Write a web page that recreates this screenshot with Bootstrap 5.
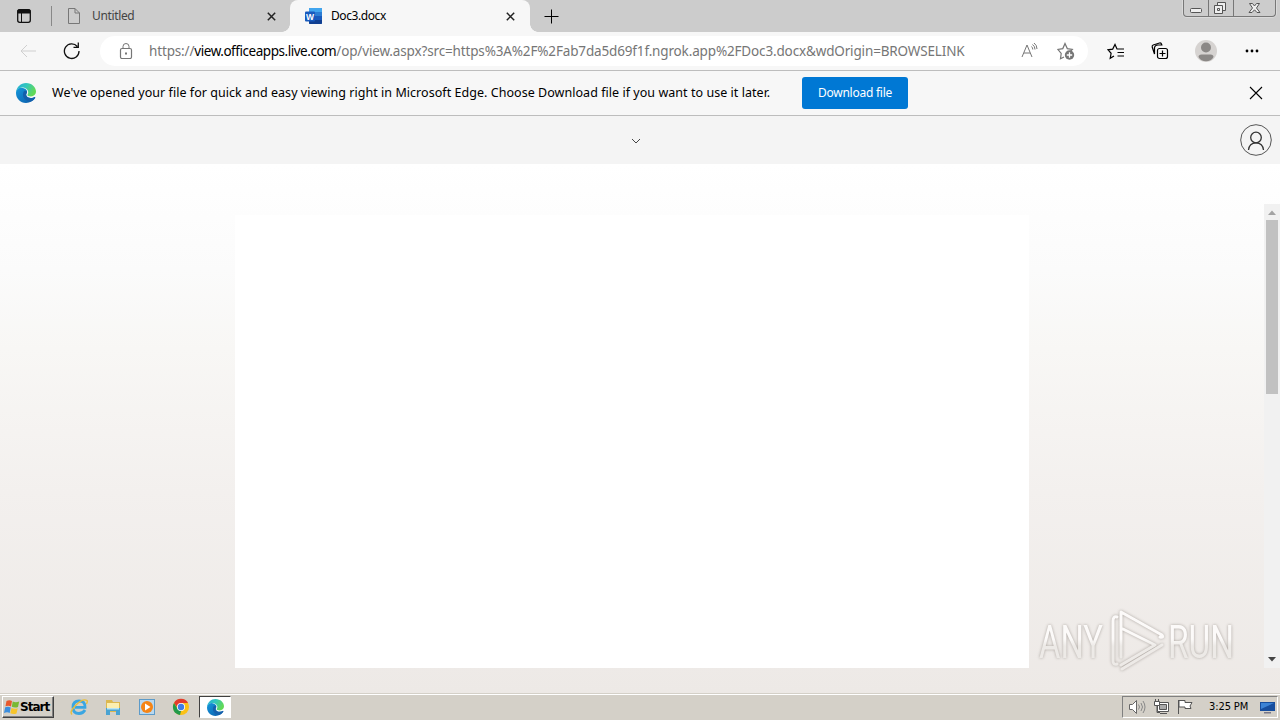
<!DOCTYPE html>
<html lang="en">
<head>
  <meta charset="UTF-8">
  <meta name="viewport" content="width=device-width, initial-scale=1.0">
  <title>Doc3.docx</title>
  <link href="https://cdn.jsdelivr.net/npm/bootstrap@5.3.0/dist/css/bootstrap.min.css" rel="stylesheet">
  <style>
    body {
      height: 720px;
      font-family: "Noto Sans", "Open Sans", sans-serif;
      font-size: 12px;
      line-height: 16px;
      color: #000;
      overflow: hidden;
    }
    svg {
      display: block;
      flex: none;
      fill: none;
      stroke: currentColor;
    }
    svg.flat {
      stroke: none;
    }
    .tab-strip {
      height: 32px;
      background: #ccc;
    }
    .strip-left {
      width: 290px;
      padding-left: 16px;
      color: #444;
    }
    .strip-line {
      width: 1px;
      height: 20px;
      margin: 0 15px 0 19px;
      background: #888;
    }
    .tab-name {
      margin-left: 11px;
      letter-spacing: -.35px;
    }
    .active-tab {
      width: 240px;
      background: #f7f7f7;
      border-radius: 8px 8px 0 0;
      padding: 0 15px;
    }
    .active-tab .tab-name {
      margin-left: 9px;
      letter-spacing: -.42px;
    }
    .active-tab::before,
    .active-tab::after {
      content: "";
      position: absolute;
      bottom: 0;
      width: 8px;
      height: 8px;
    }
    .active-tab::before {
      left: -8px;
      background: radial-gradient(circle at 0 0, #ccc 7.5px, #f7f7f7 8px);
    }
    .active-tab::after {
      right: -8px;
      background: radial-gradient(circle at 100% 0, #ccc 7.5px, #f7f7f7 8px);
    }
    .win-buttons {
      width: 93px;
      height: 17px;
      margin-right: 4px;
      border: 1px solid #777;
      border-top: 0;
      border-radius: 0 0 4px 4px;
      box-shadow: 0 0 0 1px #dadada;
    }
    .toolbar-row {
      height: 39px;
      background: #f7f7f7;
      border-bottom: 1px solid #bdbdbd;
      padding-left: 20px;
    }
    .address-bar {
      width: 988px;
      height: 30px;
      margin-left: 20px;
      padding: 0 13px 0 19px;
      border-radius: 15px;
      background: #fff;
      color: #767676;
    }
    .address-text {
      margin-left: 16px;
      font-size: 13.5px;
      letter-spacing: -.15px;
      white-space: nowrap;
    }
    .address-host {
      color: #000;
      letter-spacing: -.46px;
    }
    .file-notice {
      height: 45px;
      background: #f7f7f7;
      border-bottom: 1px solid #bdbdbd;
      padding: 0 17px 0 16px;
    }
    .notice-text {
      width: 750px;
      margin-left: 16px;
      font-size: 12.5px;
      letter-spacing: .042px;
      white-space: nowrap;
    }
    .download-btn {
      width: 106px;
      height: 32px;
      padding: 0;
      border: 0;
      border-radius: 3px;
      background: #0078d4;
      font-size: 12px;
      letter-spacing: -.25px;
      color: #fff;
    }
    .viewer-head {
      height: 48px;
      background: #f4f4f4;
      padding-right: 8px;
    }
    .viewer-body {
      height: 529px;
      background: linear-gradient(#fff 0, #fbfbfb 20%, #f8f7f5 35%, #f3f0ee 62%, #ede9e6 100%);
    }
    .doc-page {
      width: 794px;
      height: 453px;
      margin: 51px 0 0 235px;
      background: #fff;
    }
    .scroll-rail {
      width: 16px;
      height: 464px;
      margin-top: 40px;
      background: #f1f1f1;
    }
    .scroll-thumb {
      width: 12px;
      height: 174px;
      background: #c1c1c1;
    }
    .watermark {
      left: 1030px;
      top: 602px;
      filter: drop-shadow(0 0 1.5px rgba(70, 60, 50, .4));
    }
    .watermark text {
      font: 46px Roboto, sans-serif;
      stroke: none;
    }
    .task-strip {
      height: 27px;
      background: #d4d0c8;
      border-top: 1px solid #d4d0c8;
      box-shadow: inset 0 1px #fff;
      padding: 1px 2px 1px 2px;
    }
    .start-btn {
      width: 52px;
      height: 22px;
      padding-left: 1px;
      border: 1px solid;
      border-color: #fff #404040 #404040 #fff;
      box-shadow: inset -1px -1px #808080;
      font: bold 12px/16px "DejaVu Sans", sans-serif;
      letter-spacing: -1px;
    }
    .task-active {
      width: 32px;
      height: 22px;
      margin-left: 9px;
      background: #fff;
      border: 1px solid;
      border-color: #404040 #fff #fff #404040;
    }
    .tray-box {
      width: 156px;
      height: 22px;
      border: 1px solid;
      border-color: #808080 #fff #fff #808080;
      padding-left: 6px;
    }
    .tray-clock {
      width: 40px;
      margin: 0 10px 0 15px;
      font: 11px/14px "DejaVu Sans Condensed", "DejaVu Sans", sans-serif;
      letter-spacing: -.1px;
      white-space: nowrap;
    }
  </style>
</head>

<body>
  <!-- shared gradients and the Edge logo -->
  <svg width="0" height="0" class="position-absolute">
    <defs>
      <linearGradient id="edgeTop" x1="0" y1="0" x2="1" y2=".4">
        <stop offset="0" stop-color="#25a9d8"/>
        <stop offset=".5" stop-color="#32c7bd"/>
        <stop offset="1" stop-color="#62d957"/>
      </linearGradient>
      <linearGradient id="edgeLow" x1="0" y1="0" x2="1" y2="1">
        <stop offset="0" stop-color="#1598dc"/>
        <stop offset="1" stop-color="#0b5aa8"/>
      </linearGradient>
      <linearGradient id="markFade" gradientUnits="userSpaceOnUse" x1="0" y1="8" x2="0" y2="66">
        <stop offset=".5" stop-color="#fcfaf9"/>
        <stop offset=".62" stop-color="#edeae7"/>
      </linearGradient>
      <symbol id="edge" viewBox="0 0 20 20">
        <g stroke="none">
          <path fill="url(#edgeLow)" d="M0 10C0 5 5 3.500 8.500 5.500c3 1.600 3 3.500 2 4.600-1 1.500-.4 3.700 2 4.500 2.300.9 4.500.3 6-.6.600-.3.900.2.600.8C17.300 18 14 20 10 20 4.300 20 0 15.600 0 10z"/>
          <path fill="#1460ac" d="M7.500 9c-1.600 4 .5 8 5 9.300 2.500.7 5-.8 6.700-3.400.2-.7-.2-1-.7-.7-3.500 1.700-7.400 1-8.100-1.600-.4-1.300.2-2 .6-2.900.3-1.900-2.600-2.700-3.500-.7z"/>
          <path fill="url(#edgeTop)" d="M0 9.500C.5 4 4.800 0 10 0c6 0 10 4.300 10 8.600 0 3-2.300 4.800-5 4.800-2 0-3.700-.7-3.700-1.400 0-.6.900-1 .9-2.600C12.200 6.500 9.200 4.600 6 4.600c-3 0-5.300 2.200-6 4.900z"/>
        </g>
      </symbol>
    </defs>
  </svg>

  <!-- tabs -->
  <div class="tab-strip d-flex">
    <div class="strip-left d-flex align-items-center">
      <svg width="16" height="16" viewBox="0 0 16 16" color="#111"><rect x="1.700" y="1.700" width="12.600" height="12.600" rx="2" stroke-width="1.300"/><path fill="currentColor" d="M2 2h12v3H2z"/><path d="M5.500 5v9"/></svg>
      <span class="strip-line"></span>
      <svg width="14" height="16" viewBox="0 0 14 16" color="#777"><path d="M1.500.5h6.500l4.500 4.500v10.500h-11zM8 .5V5h4.500"/></svg>
      <span class="tab-name">Untitled</span>
      <svg class="ms-auto" style="margin-right: 14px" width="9" height="9" viewBox="0 0 9 9" color="#222" stroke-width="1.500"><path d="M.8.8l7.400 7.400M8.200.8L.8 8.200"/></svg>
    </div>
    <div class="active-tab position-relative d-flex align-items-center">
      <svg class="flat" width="17" height="16" viewBox="0 0 17 16"><rect x="4" width="13" height="16" rx="1" fill="#2b7cd3"/><path fill="#41a5ee" d="M4 1q0-1 1-1h11q1 0 1 1v3H4z"/><path fill="#185abd" d="M4 8h13v4H4z"/><path fill="#103f91" d="M4 12h13v3q0 1-1 1H5q-1 0-1-1z"/><rect y="3.500" width="10" height="10" rx="1" fill="#185abd"/><text x="5" y="11.700" text-anchor="middle" font-family="Liberation Sans, sans-serif" font-weight="bold" font-size="8.500" fill="#fff">W</text></svg>
      <span class="tab-name">Doc3.docx</span>
      <svg class="ms-auto" width="9" height="9" viewBox="0 0 9 9" color="#222" stroke-width="1.500"><path d="M.8.8l7.400 7.400M8.200.8L.8 8.200"/></svg>
    </div>
    <svg class="align-self-center" style="margin-left: 14px" width="15" height="15" viewBox="0 0 15 15"><path d="M7.500.5v14M.5 7.500h14"/></svg>
    <div class="win-buttons d-flex ms-auto">
      <svg width="91" height="16" viewBox="0 0 91 16" color="#555"><path d="M24.500 0v16M49.500 0v16" stroke="#777"/><rect x="6.500" y="8.500" width="11" height="4" rx="1" fill="#eee"/><path fill="#eee" d="M33.500 2.500h8v8h-8z"/><path fill="#eee" d="M30.500 5.500h8v8h-8z"/><path d="M33.500 8.500h2v2h-2z"/><path fill="#eee" d="M65.500 3.500h3l2 2.500 2-2.500h3L72.500 8l3.500 4.500h-3l-2.500-2.700-2.500 2.700h-3L68.500 8z"/></svg>
    </div>
  </div>

  <!-- address row -->
  <div class="toolbar-row d-flex align-items-center">
    <svg width="16" height="14" viewBox="0 0 16 14" color="#cfcfcf"><path d="M16 7H1M7 1L1 7l6 6"/></svg>
    <svg style="margin-left: 27px" width="17" height="18" viewBox="0 0 17 18" color="#111" stroke-width="1.300"><path d="M14.300 4.500A7.300 7.300 0 1 0 16 9M15.300.5v4.800h-4.800"/></svg>
    <div class="address-bar d-flex align-items-center">
      <svg width="14" height="16" viewBox="0 0 14 16"><rect x="1.500" y="5.500" width="11" height="10" rx="1.500" stroke-width="1.200"/><path d="M4 5.500V3.500a3 3 0 0 1 6 0v2"/><path fill="currentColor" stroke="none" d="M6 9.500h2v2H6z"/></svg>
      <span class="address-text">https://<span class="address-host">view.officeapps.live.com</span>/op/view.aspx?src=https%3A%2F%2Fab7da5d69f1f.ngrok.app%2FDoc3.docx&amp;wdOrigin=BROWSELINK</span>
      <svg class="ms-auto" width="17" height="16" viewBox="0 0 17 16"><path d="M1 14L6 2l5 12M3 10h6M10.500 3.500q1.300 1.200 1.300 3M11.500 1.500q2.500 1.800 2.500 5M13 0q3 2.200 3 6"/></svg>
      <svg style="margin-left: 19px" width="18" height="18" viewBox="0 0 18 18"><path stroke-width="1.200" d="M7 15l-3.500 1.700.7-5.200L1 7.500l4.800-.9L8 1.500l2.300 5.100 5 .9-2 2"/><circle cx="12.500" cy="13" r="4.700" fill="currentColor" stroke="none"/><path stroke="#fff" stroke-width="1.300" d="M12.500 10.300v5.400M9.800 13h5.400"/></svg>
    </div>
    <svg style="margin-left: 19px" width="18" height="17" viewBox="0 0 18 17" stroke-width="1.200"><path d="M7 13L3.200 15.300l.9-5L1 6.800l4.700-.7L8 1.500l2 4.500h7M10.500 9.500H17M10.500 13H17"/></svg>
    <svg style="margin-left: 26px" width="18" height="18" viewBox="0 0 18 18" stroke-width="1.200"><rect x="6.500" y="6.500" width="10" height="10" rx="2"/><path d="M11.500 8.500v6M8.500 11.500h6M3.500 12L1.200 5q-.3-1.500 1-2l6.300-2q1.700-.3 2 1l.3 1H7q-3 0-3.500 2.500z"/></svg>
    <svg class="flat" style="margin-left: 25px" width="24" height="24" viewBox="0 0 24 24"><circle cx="12" cy="12" r="11" fill="#d6d3d1"/><circle cx="12" cy="8.500" r="5" fill="#8b8886"/><path fill="#8b8886" d="M4.500 18q0-2.500 3-2.500h9q3 0 3 2.500-2.500 4.300-7.500 4.300T4.500 18z"/></svg>
    <svg class="flat" style="margin-left: 27px" width="14" height="4" viewBox="0 0 14 4"><g fill="#000"><circle cx="2" cy="2" r="1.400"/><circle cx="7" cy="2" r="1.400"/><circle cx="12" cy="2" r="1.400"/></g></svg>
  </div>

  <!-- download notice -->
  <div class="file-notice d-flex align-items-center">
    <svg width="20" height="20"><use href="#edge"/></svg>
    <span class="notice-text">We've opened your file for quick and easy viewing right in Microsoft Edge. Choose Download file if you want to use it later.</span>
    <button class="btn download-btn">Download file</button>
    <svg class="ms-auto" width="14" height="14" viewBox="0 0 14 14" stroke-width="1.100"><path d="M1 1l12 12M13 1L1 13"/></svg>
  </div>

  <!-- viewer -->
  <div class="viewer-head d-flex align-items-center">
    <svg style="margin: 2px 0 0 631px" width="10" height="6" viewBox="0 0 10 6" color="#444"><path d="M1 1l4 4 4-4"/></svg>
    <svg class="ms-auto" width="32" height="32" viewBox="0 0 32 32" color="#555"><circle cx="16" cy="16" r="15.300"/><g stroke-width="1.300" stroke="#333"><circle cx="16" cy="13.500" r="5.300"/><path d="M8.500 26q.7-7.200 7.500-7.200t7.500 7.200"/></g></svg>
  </div>
  <div class="viewer-body d-flex">
    <div class="doc-page"></div>
    <div class="scroll-rail d-flex flex-column align-items-center ms-auto">
      <svg class="flat" width="16" height="16" viewBox="0 0 16 16"><path fill="#a3a3a3" d="M4 11l4-4.500 4 4.500z"/></svg>
      <div class="scroll-thumb"></div>
      <svg class="flat mt-auto" width="16" height="16" viewBox="0 0 16 16"><path fill="#444" d="M4 5l4 4.500L12 5z"/></svg>
    </div>
  </div>
  <svg class="watermark position-absolute" width="250" height="74" viewBox="0 0 250 74">
    <text x="9" y="56" textLength="64" lengthAdjust="spacingAndGlyphs" fill="url(#markFade)">ANY</text>
    <text x="138" y="56" textLength="66" lengthAdjust="spacingAndGlyphs" fill="url(#markFade)">RUN</text>
    <path stroke="url(#markFade)" stroke-width="3" stroke-linejoin="round" stroke-linecap="round" d="M87 15q-4-1-4 4v40q0 4 4 3M91 55V10l41 23q2 3-2 2M93 27l32 16-34 20M92 67l40-24"/>
  </svg>

  <!-- taskbar -->
  <div class="task-strip d-flex align-items-center">
    <div class="start-btn d-flex align-items-center">
      <svg class="flat" width="16" height="16" viewBox="0 0 16 16"><path fill="#e7592d" d="M2.500 2q3-1.500 5.500 0L7 7.500Q4.500 6 1.500 7.300z"/><path fill="#79b932" d="M8.700 2.500q3 1.500 6.500 0l-1.200 5.500q-3 1.300-6.200-.2z"/><path fill="#3b8ede" d="M1.200 8.300q3-1.300 5.500.2l-1 5.500q-2.500-1.500-5.700 0z"/><path fill="#f7c52b" d="M7.500 9q3 1.500 6.200.2l-1.200 5.300q-3 1.300-6.200-.2z"/></svg>
      <span>Start</span>
    </div>
    <svg style="margin-left: 16px" width="18" height="18" viewBox="0 0 18 18"><path d="M15 12q-2 3.500-6 3.500-6 0-6-6.300 0-6.200 6-6.200 6.300 0 6 6.300H5" stroke="#3aa6e2" stroke-width="2.800"/><path d="M2 16.500Q-1 14 6 7t11-4.500q.8.700-.5 3.500" stroke="#e9bd3b" stroke-width="1.400"/></svg>
    <svg class="flat" style="margin-left: 16px" width="18" height="18" viewBox="0 0 18 18"><path fill="#dcb850" d="M2 2h6l1 2h7v10H2z"/><path fill="#fbeeb0" d="M3 5h12v5H3z"/><path fill="#4aa3d2" d="M2 10h14v7h-4v-4H6v4H2z"/><path fill="#b9e4f5" d="M3 10h12v1.500H3z"/></svg>
    <svg class="flat" style="margin-left: 16px" width="18" height="18" viewBox="0 0 18 18"><rect x="1.500" y="1.500" width="15" height="15" fill="#b9d8ef" stroke="#5d9bc9"/><circle cx="9" cy="9" r="6" fill="#f58415"/><path fill="#fff" d="M7 5.500L12.500 9 7 12.500z"/></svg>
    <svg class="flat" style="margin-left: 16px" width="18" height="18" viewBox="0 0 18 18"><circle cx="9" cy="9" r="8" fill="#fbc116"/><path fill="#e33b2e" d="M2 5a8 8 0 0 1 14 0H9v4H5z"/><path fill="#229a4b" d="M2 5l3.700 6L9 13l-1 4A8 8 0 0 1 2 5z"/><circle cx="9" cy="9" r="4" fill="#fff"/><circle cx="9" cy="9" r="3.200" fill="#3f7de8"/></svg>
    <div class="task-active d-flex align-items-center justify-content-center"><svg width="17" height="17"><use href="#edge"/></svg></div>
    <div class="tray-box d-flex align-items-center ms-auto">
      <svg width="17" height="16" viewBox="0 0 17 16" color="#666"><path fill="#fff" d="M.5 5.500h3l4-4v13l-4-4h-3z"/><path d="M9.500 5.500q2 2.500 0 5M12 4q3 4 0 8M14 2q4 6 0 12" stroke="#888"/></svg>
      <svg style="margin-left: 7px" width="17" height="16" viewBox="0 0 17 16" color="#555"><path fill="#fff" d="M4.500 3.500h11v9h-11z"/><path fill="#aaa" d="M6.500 5.500h7v5h-7z"/><path fill="#fff" d="M1.500 2.500h5v4h-5z"/><path d="M2.500 0v2M5.500 0v2M4 7v6.500h3M7 14.500h7"/></svg>
      <svg style="margin-left: 7px" width="17" height="16" viewBox="0 0 17 16" color="#555"><path fill="#fff" d="M1.500 1v14M2 1.500h6v2h7l-2 3.500 1 2.500H8V8H2z"/></svg>
      <span class="tray-clock">3:25 PM</span>
      <svg class="flat" width="17" height="15" viewBox="0 0 17 15"><path fill="#174e9e" d="M1 2h15v9H1z"/><path fill="#3c83d5" d="M2 3h13L2 9z"/><path fill="#778" d="M5 12h7v1.500H5z"/></svg>
    </div>
  </div>
  <script src="https://cdn.jsdelivr.net/npm/bootstrap@5.3.0/dist/js/bootstrap.bundle.min.js"></script>
</body>
</html>
